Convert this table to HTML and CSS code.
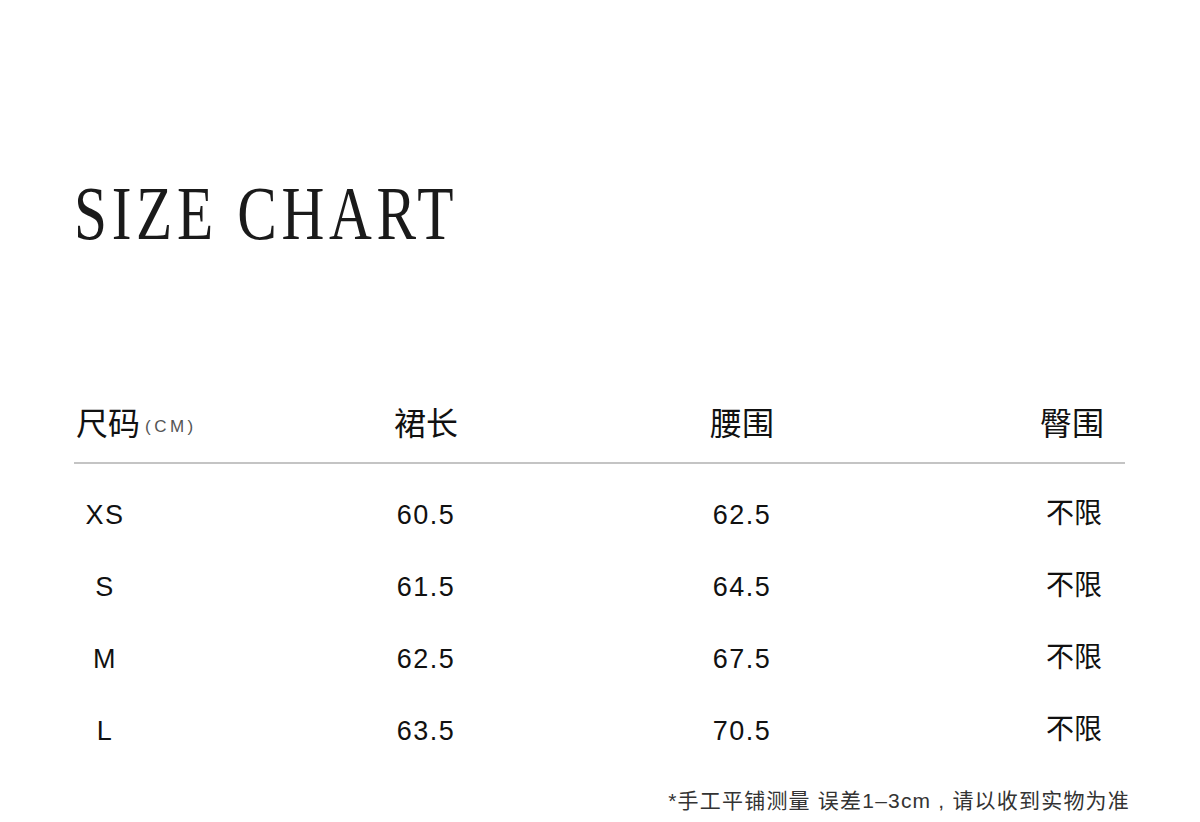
FILE: index.html
```html
<!DOCTYPE html>
<html lang="zh">
<head>
<meta charset="utf-8">
<title>Size Chart</title>
<link rel="stylesheet" href="styles.css">
</head>
<body>
<main class="page">
  <h1 class="title">SIZE CHART</h1>
  <section class="chart">
    <div class="row head">
      <div class="c1"><span class="zh">尺码</span><span class="unit">(CM)</span></div>
      <div class="c2 zh">裙长</div>
      <div class="c3 zh">腰围</div>
      <div class="c4 zh">臀围</div>
    </div>
    <div class="body">
      <div class="row">
        <div class="c1"><span class="size">XS</span></div>
        <div class="c2 num">60.5</div>
        <div class="c3 num">62.5</div>
        <div class="c4 lim">不限</div>
      </div>
      <div class="row">
        <div class="c1"><span class="size">S</span></div>
        <div class="c2 num">61.5</div>
        <div class="c3 num">64.5</div>
        <div class="c4 lim">不限</div>
      </div>
      <div class="row">
        <div class="c1"><span class="size">M</span></div>
        <div class="c2 num">62.5</div>
        <div class="c3 num">67.5</div>
        <div class="c4 lim">不限</div>
      </div>
      <div class="row">
        <div class="c1"><span class="size">L</span></div>
        <div class="c2 num">63.5</div>
        <div class="c3 num">70.5</div>
        <div class="c4 lim">不限</div>
      </div>
    </div>
  </section>
  <p class="note">*手工平铺测量 误差1–3cm , 请以收到实物为准</p>
</main>
</body>
</html>
```

FILE: styles.css
```css
html, body {
  margin: 0;
  padding: 0;
  background: #ffffff;
}

body {
  color: #111111;
  font-family: "Liberation Sans", "Noto Sans CJK SC", sans-serif;
}

.page {
  width: 1200px;
  height: 822px;
  box-sizing: border-box;
  padding: 174px 75px 0 74px;
  display: flex;
  flex-direction: column;
}

.title {
  margin: 0;
  font-family: "Liberation Serif", serif;
  font-weight: 400;
  font-size: 76px;
  line-height: 79px;
  letter-spacing: 6px;
  color: #1a1a1a;
  transform: scaleX(0.78);
  transform-origin: left center;
  white-space: nowrap;
}

.chart {
  margin-top: 148px;
  display: flex;
  flex-direction: column;
}

.row {
  display: grid;
  grid-template-columns: 190px 324px 308px 1fr;
  align-items: center;
  height: 72px;
}

.row.head {
  height: 40px;
  padding-bottom: 21px;
  border-bottom: 2px solid #c4c4c4;
}

.body {
  margin-top: 15px;
  display: flex;
  flex-direction: column;
}

.c1 {
  justify-self: start;
  white-space: nowrap;
}

.c2, .c3 {
  justify-self: center;
}

.c4 {
  justify-self: end;
  padding-right: 21px;
}

.zh {
  font-family: "Noto Sans CJK SC", sans-serif;
  font-size: 32px;
  line-height: 40px;
  font-weight: 400;
}

.head .c1 {
  margin-left: 2px;
}

.unit {
  display: inline-block;
  font-family: "Liberation Sans", sans-serif;
  font-size: 17px;
  letter-spacing: 3.5px;
  color: #555555;
  margin-left: 5px;
  vertical-align: 3px;
}

.size {
  display: inline-block;
  width: 62px;
  text-align: center;
  font-size: 27px;
  letter-spacing: 1.5px;
}

.num {
  font-size: 27px;
  line-height: 36px;
  letter-spacing: 1.5px;
}

.lim {
  font-family: "Noto Sans CJK SC", sans-serif;
  font-size: 28px;
  line-height: 36px;
  padding-right: 23px;
  padding-bottom: 9px;
}

.note {
  margin: 20px -5px 0 0;
  align-self: flex-end;
  font-family: "Liberation Sans", "Noto Sans CJK SC", sans-serif;
  font-size: 21px;
  line-height: 28px;
  letter-spacing: 1.2px;
  color: #333333;
  white-space: nowrap;
}
```
